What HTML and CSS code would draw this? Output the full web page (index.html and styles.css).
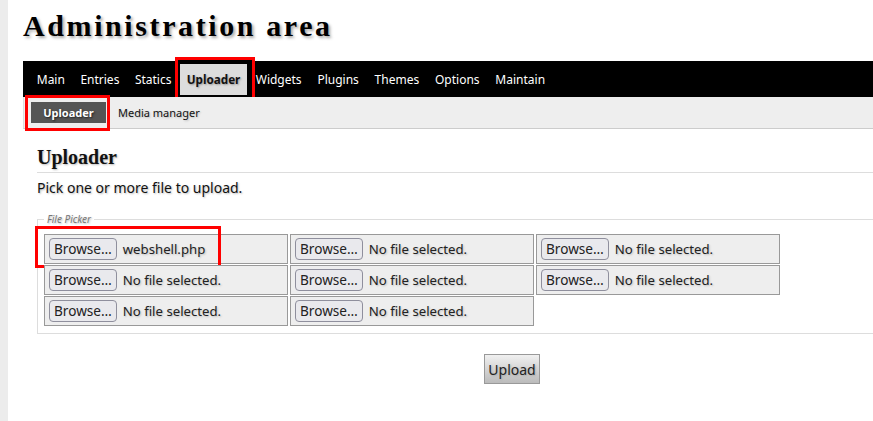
FILE: index.html
```html
<!DOCTYPE html>
<html>
<head>
<meta charset="utf-8">
<link rel="stylesheet" href="styles.css">
</head>
<body>
<div class="page">
  <h1 class="site-title">Administration area</h1>
  <nav class="mainnav">
    <a class="tab">Main</a>
    <a class="tab">Entries</a>
    <a class="tab">Statics</a>
    <a class="tab active">Uploader</a>
    <a class="tab">Widgets</a>
    <a class="tab">Plugins</a>
    <a class="tab">Themes</a>
    <a class="tab">Options</a>
    <a class="tab">Maintain</a>
    <span class="mark mark-tab"></span>
  </nav>
  <nav class="subnav">
    <a class="subtab active">Uploader</a>
    <a class="subtab">Media manager</a>
    <span class="mark mark-sub"></span>
  </nav>
  <div class="content">
    <h2 class="section-title">Uploader</h2>
    <p class="intro">Pick one or more file to upload.</p>
    <fieldset class="picker">
      <legend>File Picker</legend>
      <div class="files">
        <div class="file"><span class="browse">Browse…</span><span class="fname">webshell.php</span><span class="mark mark-file"></span></div>
        <div class="file"><span class="browse">Browse…</span><span class="fname">No file selected.</span></div>
        <div class="file"><span class="browse">Browse…</span><span class="fname">No file selected.</span></div>
        <div class="file"><span class="browse">Browse…</span><span class="fname">No file selected.</span></div>
        <div class="file"><span class="browse">Browse…</span><span class="fname">No file selected.</span></div>
        <div class="file"><span class="browse">Browse…</span><span class="fname">No file selected.</span></div>
        <div class="file"><span class="browse">Browse…</span><span class="fname">No file selected.</span></div>
        <div class="file"><span class="browse">Browse…</span><span class="fname">No file selected.</span></div>
      </div>
    </fieldset>
    <div class="actions"><button class="upload">Upload</button></div>
  </div>
</div>
</body>
</html>
```

FILE: styles.css
```css
html, body {
  margin: 0;
  padding: 0;
  background: #fff;
  overflow: hidden;
}
body {
  border-left: 8px solid #ececec;
  min-height: 421px;
  box-sizing: border-box;
  font-family: "Noto Sans", "Open Sans", sans-serif;
  color: #111;
  text-shadow: 1px 1px 2px #bbb;
}
.page {
  width: 1000px;
  padding-left: 15px;
}
.site-title {
  margin: 0;
  padding-top: 7px;
  height: 61px;
  box-sizing: border-box;
  font-family: "Liberation Serif", serif;
  font-weight: bold;
  font-size: 30px;
  line-height: 38px;
  letter-spacing: 2.6px;
  color: #000;
  text-shadow: 2px 2px 3px #aaa;
}
.mainnav {
  position: relative;
  background: #000;
  height: 36px;
  display: flex;
  align-items: center;
  padding-left: 6px;
}
.tab {
  font-size: 12px;
  color: #fff;
  padding: 0 7.75px;
  line-height: 31px;
  text-shadow: none;
}
.tab.active {
  background: #ddd;
  color: #111;
  font-weight: bold;
  font-size: 11.7px;
  padding: 0 7px;
  margin: 0 0.5px;
  text-shadow: 1px 1px 2px #999;
}
.tab.active + .tab ~ .tab,
.tab.active + .tab {
  padding: 0 7.9px;
}
.subnav {
  position: relative;
  background: #eee;
  height: 31px;
  border-bottom: 1px solid #ccc;
  border-left: 1px solid #ddd;
  display: flex;
  align-items: center;
  padding-left: 7px;
}
.subtab {
  font-size: 11px;
  padding: 0 12px;
  line-height: 21px;
  color: #111;
}
.subtab.active {
  background: #555;
  color: #fff;
  font-weight: bold;
  padding: 0 12px;
  width: 51px;
  text-align: center;
  text-shadow: 1px 1px 2px #222;
}
.mark {
  position: absolute;
  border: 3px solid #f00;
  box-sizing: border-box;
  pointer-events: none;
}
.mark-tab {
  left: 152px;
  top: -4px;
  width: 80px;
  height: 43px;
  box-shadow: inset 0 0 0 2px #000;
}
.mark-sub {
  left: 1px;
  top: -2px;
  width: 85px;
  height: 36px;
}
.content {
  padding: 0 0 0 14px;
  width: 950px;
}
.section-title {
  margin: 0;
  padding-top: 16px;
  font-family: "Liberation Serif", serif;
  font-size: 20px;
  line-height: 24px;
  font-weight: bold;
  padding-bottom: 3px;
  border-bottom: 1px solid #ddd;
  color: #111;
}
.intro {
  margin: 5px 0 0;
  font-size: 14px;
  line-height: 20px;
}
.picker {
  margin: 16px 0 0;
  border: 1px solid #ddd;
  padding: 10px 6px 7px;
  min-width: 0;
}
.picker legend {
  font-size: 10px;
  font-style: italic;
  color: #777;
  padding: 0 3px;
  margin-left: 0;
  line-height: 10px;
}
.files {
  display: grid;
  grid-auto-flow: column;
  grid-template-rows: repeat(3, 30px);
  grid-template-columns: repeat(3, 244px);
  column-gap: 2px;
  row-gap: 1px;
  justify-content: start;
}
.file {
  position: relative;
  border: 1px solid #999;
  background: #eee;
  display: flex;
  align-items: center;
  padding-left: 4px;
  box-sizing: border-box;
  font-size: 13.2px;
}
.browse {
  border: 1px solid #8f8f9d;
  border-radius: 4px;
  background: #e9e9ed;
  height: 22px;
  line-height: 20px;
  box-sizing: border-box;
  padding: 0 4px;
  font-size: 13.6px;
  color: #222;
  margin-right: 6px;
  text-shadow: none;
}
.fname {
  color: #222;
}
.mark-file {
  left: -10px;
  top: -9px;
  width: 186px;
  height: 42px;
}
.actions {
  text-align: center;
  padding-top: 20px;
}
.upload {
  font-family: "Noto Sans", "Open Sans", sans-serif;
  font-size: 14px;
  height: 30px;
  padding: 0 3px;
  border: 1px solid #999;
  background: linear-gradient(#f0f0f0, #bbb);
  color: #222;
  text-shadow: 1px 1px 2px #aaa;
}
```
